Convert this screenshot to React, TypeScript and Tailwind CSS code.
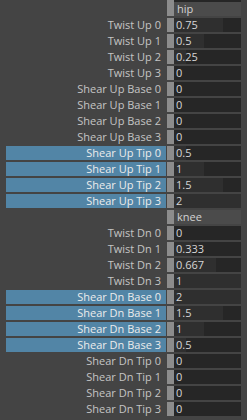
import React from "react";

type Row = { label: string; value: string; num: number; range: number; hl?: boolean };

const hip: Row[] = [
  { label: "Twist Up 0", value: "0.75", num: 0.75, range: 1 },
  { label: "Twist Up 1", value: "0.5", num: 0.5, range: 1 },
  { label: "Twist Up 2", value: "0.25", num: 0.25, range: 1 },
  { label: "Twist Up 3", value: "0", num: 0, range: 1 },
  { label: "Shear Up Base 0", value: "0", num: 0, range: 2 },
  { label: "Shear Up Base 1", value: "0", num: 0, range: 2 },
  { label: "Shear Up Base 2", value: "0", num: 0, range: 2 },
  { label: "Shear Up Base 3", value: "0", num: 0, range: 2 },
  { label: "Shear Up Tip 0", value: "0.5", num: 0.5, range: 2, hl: true },
  { label: "Shear Up Tip 1", value: "1", num: 1, range: 2, hl: true },
  { label: "Shear Up Tip 2", value: "1.5", num: 1.5, range: 2, hl: true },
  { label: "Shear Up Tip 3", value: "2", num: 2, range: 2, hl: true },
];

const knee: Row[] = [
  { label: "Twist Dn 0", value: "0", num: 0, range: 1 },
  { label: "Twist Dn 1", value: "0.333", num: 0.333, range: 1 },
  { label: "Twist Dn 2", value: "0.667", num: 0.667, range: 1 },
  { label: "Twist Dn 3", value: "1", num: 1, range: 1 },
  { label: "Shear Dn Base 0", value: "2", num: 2, range: 2, hl: true },
  { label: "Shear Dn Base 1", value: "1.5", num: 1.5, range: 2, hl: true },
  { label: "Shear Dn Base 2", value: "1", num: 1, range: 2, hl: true },
  { label: "Shear Dn Base 3", value: "0.5", num: 0.5, range: 2, hl: true },
  { label: "Shear Dn Tip 0", value: "0", num: 0, range: 2 },
  { label: "Shear Dn Tip 1", value: "0", num: 0, range: 2 },
  { label: "Shear Dn Tip 2", value: "0", num: 0, range: 2 },
  { label: "Shear Dn Tip 3", value: "0", num: 0, range: 2 },
];

function Header({ name }: { name: string }) {
  return (
    <div className="flex h-[14px] mb-[2px]">
      <div className="w-[167px]" />
      <div className="w-[7px] bg-[#8c8c8c]" />
      <div className="w-[67px] bg-[#4b4b4b] pl-[3px] text-[#d2d2d2] leading-[14px]">{name}</div>
    </div>
  );
}

function AttrRow({ r }: { r: Row }) {
  const fill = Math.max(0, Math.min(74, (r.num / r.range) * 74) - 7);
  return (
    <div className="flex h-[14px] mb-[2px]">
      <div className="w-[167px] pl-[6px] pr-[1px]">
        <div
          className={
            r.hl
              ? "h-full bg-[#5285a6] text-[#ececec] text-right pr-[5px] leading-[14px] whitespace-nowrap"
              : "h-full text-[#c4c4c4] text-right pr-[5px] leading-[14px] whitespace-nowrap"
          }
        >
          {r.label}
        </div>
      </div>
      <div className="w-[7px] bg-[#8c8c8c]" />
      <div className="relative w-[67px] bg-[#262626]">
        <div className="absolute left-0 top-0 bottom-0 bg-[#2f2f2f]" style={{ width: fill }} />
        <div className="relative pl-[2px] text-[#d6d6d6] leading-[14px]">{r.value}</div>
      </div>
    </div>
  );
}

export default function App() {
  return (
    <div
      className="w-[247px] h-[420px] bg-[#444444] overflow-hidden text-[11px]"
      style={{ fontFamily: '"Open Sans", "Liberation Sans", sans-serif' }}
    >
      <div className="flex h-[2px]">
        <div className="w-[167px]" />
        <div className="w-[7px] bg-[#8c8c8c]" />
        <div className="w-[67px] bg-[#262626]" />
      </div>
      <Header name="hip" />
      {hip.map((r) => (
        <AttrRow key={r.label} r={r} />
      ))}
      <Header name="knee" />
      {knee.map((r) => (
        <AttrRow key={r.label} r={r} />
      ))}
    </div>
  );
}
